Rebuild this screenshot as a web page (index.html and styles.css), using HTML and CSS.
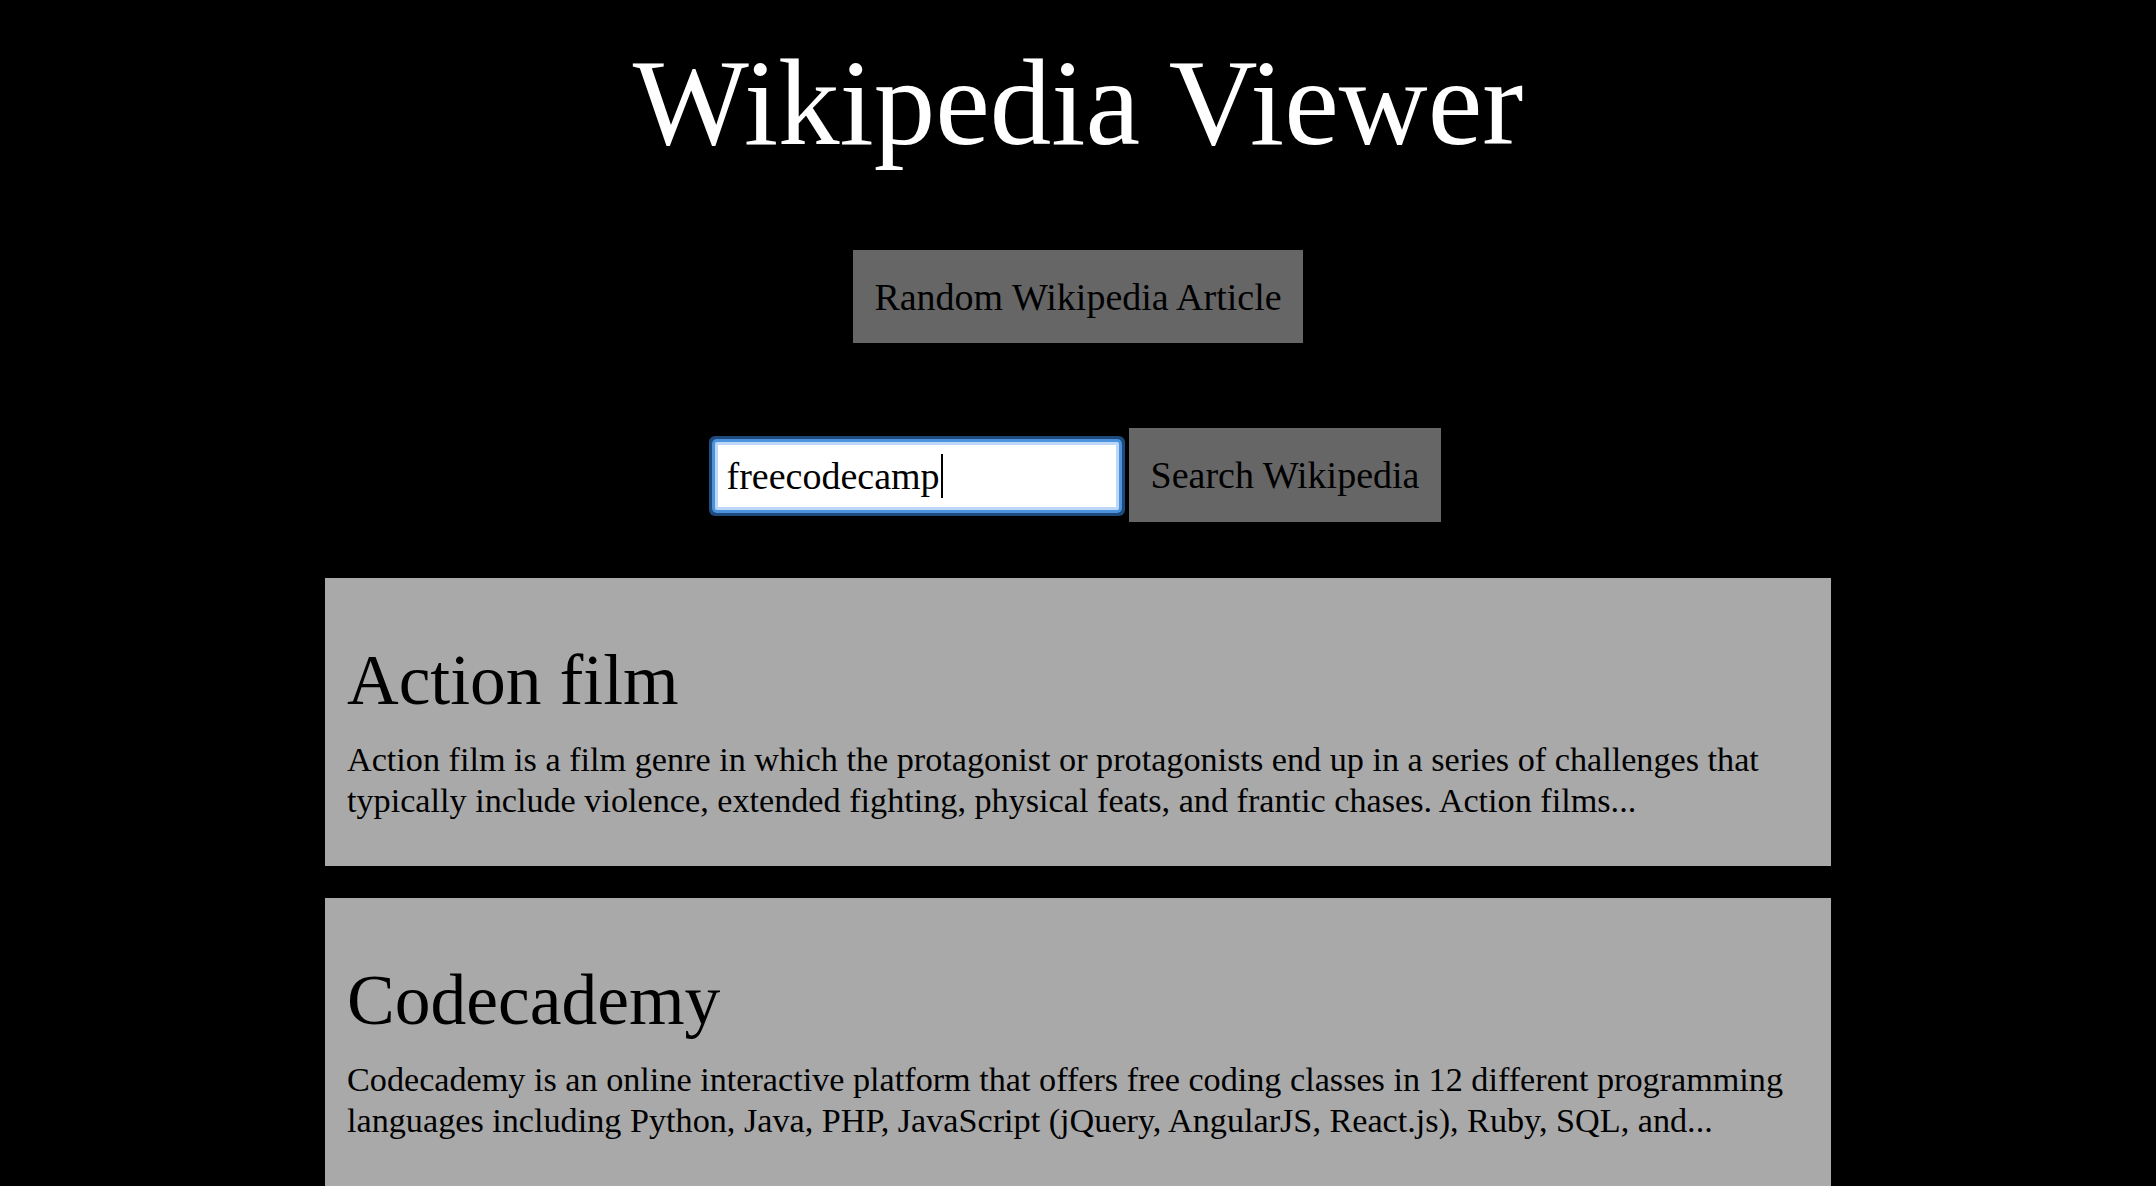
FILE: index.html
```html
<!DOCTYPE html>
<html lang="en">
<head>
<meta charset="utf-8">
<title>Wikipedia Viewer</title>
<link rel="stylesheet" href="styles.css">
</head>
<body>
<header class="header">
  <h1 class="title">Wikipedia Viewer</h1>
  <a class="btn btn-random" href="#">Random Wikipedia Article</a>
</header>
<form class="search-row" onsubmit="return false">
  <div class="search-input" role="textbox" aria-label="Search"><span class="search-text">freecodecamp</span><span class="caret"></span></div>
  <button class="btn btn-search" type="submit">Search Wikipedia</button>
</form>
<main class="results">
  <article class="card">
    <h2 class="card-title">Action film</h2>
    <p class="card-text">Action film is a film genre in which the protagonist or protagonists end up in a series of challenges that typically include violence, extended fighting, physical feats, and frantic chases. Action films...</p>
  </article>
  <article class="card">
    <h2 class="card-title">Codecademy</h2>
    <p class="card-text">Codecademy is an online interactive platform that offers free coding classes in 12 different programming languages including Python, Java, PHP, JavaScript (jQuery, AngularJS, React.js), Ruby, SQL, and...</p>
  </article>
</main>
</body>
</html>
```
FILE: styles.css
```css
html, body {
  margin: 0;
  padding: 0;
  background: #000;
}
body {
  font-family: "Liberation Serif", "Times New Roman", serif;
  color: #000;
  overflow: hidden;
  height: 1186px;
}
.header {
  display: flex;
  flex-direction: column;
  align-items: center;
  padding-top: 41px;
}
.title {
  margin: 0;
  font-size: 123px;
  line-height: 123px;
  font-weight: normal;
  color: #fff;
}
.btn {
  display: inline-flex;
  align-items: center;
  justify-content: center;
  box-sizing: border-box;
  background: #666;
  color: #000;
  border: none;
  font-family: inherit;
  font-size: 38px;
  text-decoration: none;
  padding: 0 21px;
  margin: 0;
}
.btn-random {
  margin-top: 86px;
  height: 93px;
}
.search-row {
  display: flex;
  justify-content: center;
  align-items: center;
  gap: 10px;
  margin: 85px 0 0;
}
.search-input {
  box-sizing: border-box;
  width: 404px;
  height: 68px;
  background: #fff;
  border: 3px solid #bcd7f7;
  border-radius: 2px;
  box-shadow: 0 0 0 3px #4d92dd, 0 0 0 6px #1e4a7d;
  display: flex;
  align-items: center;
  padding: 0 9px;
  font-size: 38px;
  margin-top: 2px;
}
.caret {
  display: inline-block;
  width: 2px;
  height: 44px;
  background: #000;
  margin-left: 1px;
}
.btn-search {
  height: 94px;
  padding: 0 22px;
}
.results {
  display: flex;
  flex-direction: column;
  align-items: center;
  gap: 32px;
  margin-top: 56px;
}
.card {
  box-sizing: border-box;
  width: 1506px;
  background: #a9a9a9;
  padding: 60px 22px 45px;
}
.card-title {
  margin: 0;
  font-size: 71.5px;
  line-height: 84px;
  font-weight: normal;
}
.card-text {
  margin: 17px 0 0;
  font-size: 34.2px;
  line-height: 41px;
}
```
